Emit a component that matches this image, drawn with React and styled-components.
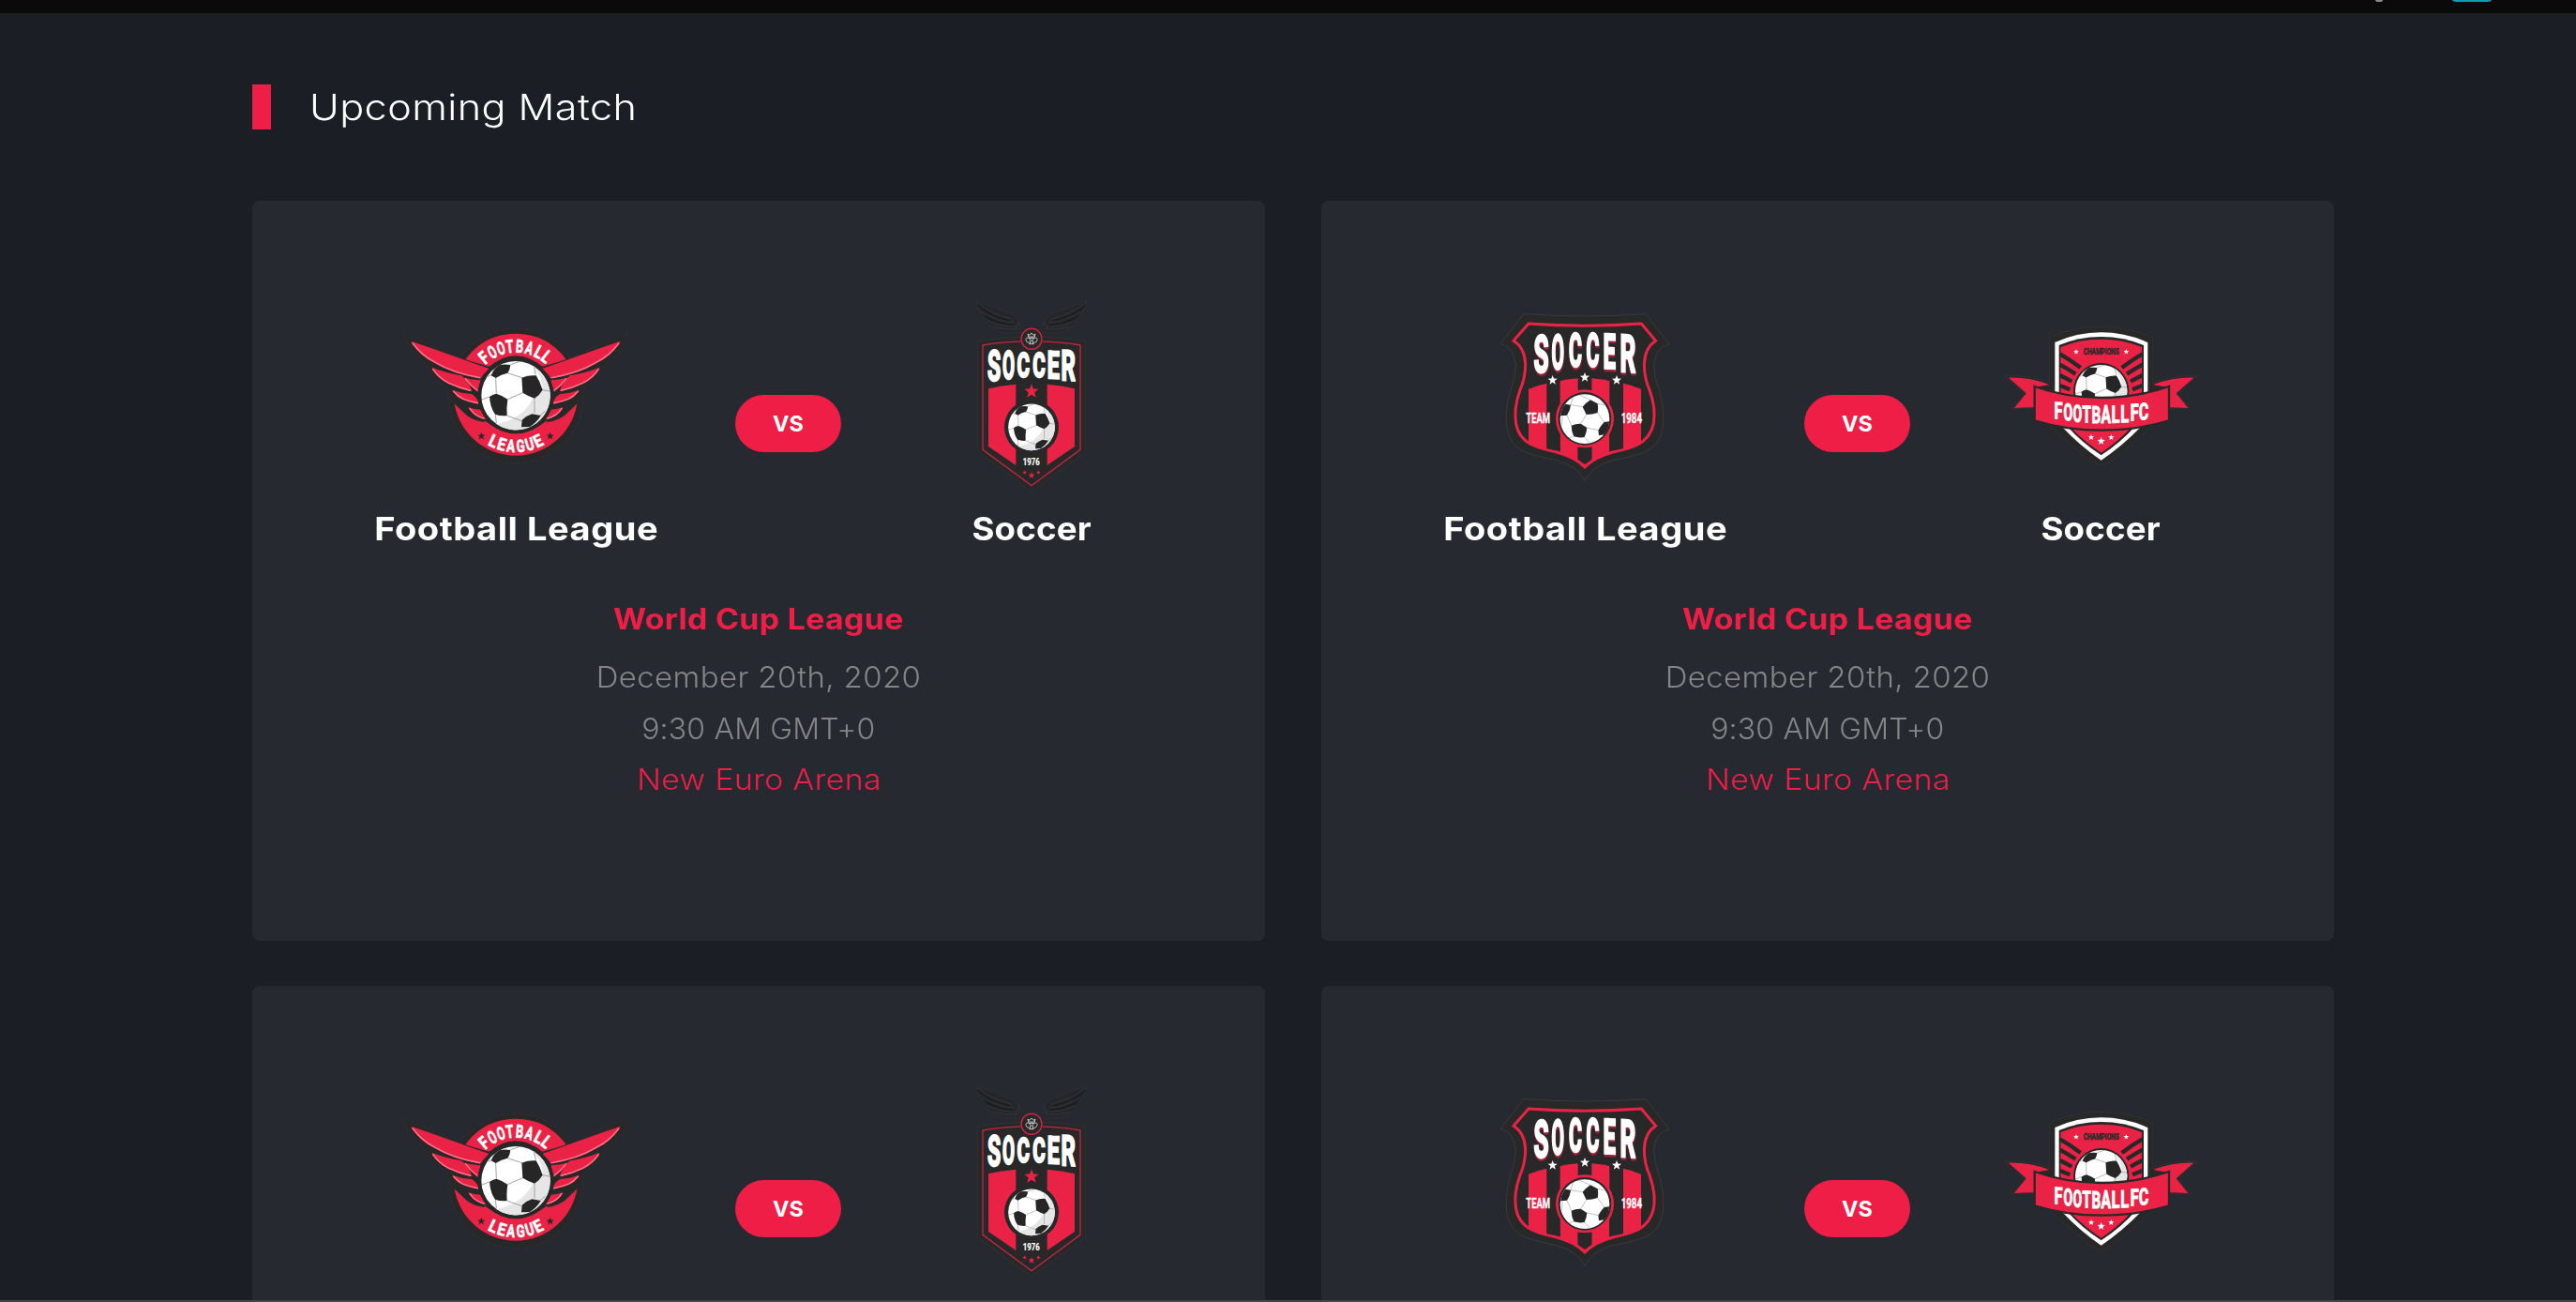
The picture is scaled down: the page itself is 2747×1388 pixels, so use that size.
import React from "react";
import styled, { createGlobalStyle } from "styled-components";

const RED = "#ee1e46";
const CREST_RED = "#ea2346";
const INK = "#282828";

const Global = createGlobalStyle`
  *, *::before, *::after { box-sizing: border-box; }
  html, body { margin: 0; background: #1b1e25; }
  body { font-family: Inter, "Liberation Sans", sans-serif; overflow: hidden; }
`;

const Page = styled.div`
  height: 1388px;
  overflow: hidden;
  display: flex;
  flex-direction: column;
  background: #1b1e25;
`;

const TopBar = styled.header`
  flex: none;
  height: 14px;
  background: #0a0a0a;
  display: flex;
  justify-content: flex-end;
  align-items: flex-start;
  gap: 74px;
  padding-right: 90px;
`;

const CaretTip = styled.i`
  width: 8px;
  height: 2px;
  background: #8a8a8a;
  border-radius: 0 0 4px 4px;
`;

const ButtonEdge = styled.i`
  width: 42px;
  height: 2px;
  background: #0b9db0;
  border-radius: 0 0 6px 6px / 0 0 2px 2px;
`;

const Section = styled.main`
  flex: 1;
  min-height: 0;
  overflow: hidden;
  width: 2220px;
  margin-left: 269px;
  padding-top: 76px;
`;

const Heading = styled.div`
  display: flex;
  align-items: center;
  gap: 41px;
  height: 48px;
  margin-bottom: 76px;
`;

const Marker = styled.span`
  width: 20px;
  height: 48px;
  background: ${RED};
`;

/* Widened lettering. Letter spacing trails the last glyph, so it is pulled back on the right. */
const Wide = styled.span`
  display: block;
  white-space: nowrap;
  letter-spacing: ${(p) => p.$track}px;
  margin-right: ${(p) => -p.$track}px;
  transform: scaleX(${(p) => p.$stretch});
  transform-origin: ${(p) => p.$origin || "center"};
`;

const Title = styled.h2`
  margin: 0;
  font-size: 38.5px;
  line-height: 48px;
  font-weight: 330;
  color: #fff;
`;

const Grid = styled.div`
  display: grid;
  grid-template-columns: 1080px 1080px;
  grid-auto-rows: 789px;
  column-gap: 60px;
  row-gap: 48px;
`;

const Card = styled.article`
  background: #272930;
  border-radius: 8px;
  padding-top: 86px;
  display: flex;
  flex-direction: column;
  align-items: center;
`;

const Versus = styled.div`
  width: 1080px;
  display: grid;
  grid-template-columns: 400px 113px 400px;
  column-gap: 34px;
  padding-left: 81px;
  align-items: start;
`;

const Team = styled.div`
  display: flex;
  flex-direction: column;
  align-items: center;
  gap: 13px;
  padding-right: ${(p) => p.$inset || 0}px;
`;

const Crest = styled.svg`
  display: block;
  width: ${(p) => p.$w}px;
  height: 230px;
`;

const TeamName = styled.h3`
  margin: 0;
  height: 40px;
  line-height: 40px;
  font-size: 34.6px;
  font-weight: 700;
  color: #fff;
`;

const Pill = styled.span`
  margin-top: 121px;
  height: 61px;
  border-radius: 31px;
  background: ${RED};
  color: #fff;
  font-size: 23.4px;
  font-weight: 700;
  display: flex;
  align-items: center;
  justify-content: center;
  line-height: 61px;
`;

const Info = styled.div`
  margin-top: 57px;
  display: flex;
  flex-direction: column;
  align-items: center;
  font-size: 30.8px;
`;

const League = styled.strong`
  line-height: 40px;
  margin-bottom: 15.4px;
  font-weight: 700;
  color: ${RED};
`;

const Line = styled.span`
  height: 54.4px;
  line-height: 54.4px;
  font-weight: 320;
  color: ${(p) => (p.$accent ? RED : "#858585")};
`;

const FootRule = styled.footer`
  flex: none;
  height: 2px;
  background: #454545;
`;

const glyphFont = { fontFamily: 'Roboto, "Liberation Sans", sans-serif', fontWeight: 700 };

/* One letter fitted to a box: x/y is the bottom-left corner, w/h the letter size. */
function Glyph({ c, x, y, w, h, fill = "#fff", stroke = 1, rot = 0, skew = 0 }) {
  const size = h / 0.711;
  return (
    <g transform={`translate(${x + w / 2} ${y}) rotate(${rot}) skewY(${skew})`}>
      <text
        x={-w / 2 - w * 0.06}
        y={0}
        textLength={w * 1.12}
        lengthAdjust="spacingAndGlyphs"
        fontSize={size}
        fill={fill}
        stroke={fill}
        strokeWidth={stroke}
        style={glyphFont}
      >
        {c}
      </text>
    </g>
  );
}

function Word({ children, x, y, w, h, fill = "#fff", stroke = 0.6 }) {
  return (
    <text
      x={x}
      y={y}
      textLength={w}
      lengthAdjust="spacingAndGlyphs"
      fontSize={h / 0.711}
      fill={fill}
      stroke={fill}
      strokeWidth={stroke}
      style={glyphFont}
    >
      {children}
    </text>
  );
}

function Arc({ cx, cy, r, letters, w, h, flip }) {
  return letters.map(([c, deg], i) => {
    const a = (deg * Math.PI) / 180;
    const x = cx + r * Math.sin(a);
    const y = cy + (flip ? 1 : -1) * r * Math.cos(a);
    return <Glyph key={i} c={c} x={x - w / 2} y={y} w={w} h={h} stroke={2} rot={flip ? -deg : deg} />;
  });
}

function Star({ x, y, r, fill = "#fff" }) {
  const pts = Array.from({ length: 10 }, (_, i) => {
    const a = (Math.PI / 5) * i - Math.PI / 2;
    const q = i % 2 ? r * 0.42 : r;
    return `${(x + q * Math.cos(a)).toFixed(1)},${(y + q * Math.sin(a)).toFixed(1)}`;
  }).join(" ");
  return <polygon points={pts} fill={fill} />;
}

/* Football with a 110 unit radius, centred on the origin. */
function Ball({ x, y, k = 1 }) {
  return (
    <g transform={`translate(${x} ${y}) scale(${k})`}>
      <circle r="110" fill="#fff" />
      <path d="M110 -8 A110 110 0 0 1 -62 91 Q10 76 42 30 Q58 8 60 -14 L86 -18 Q88 -56 56 -92 Q106 -58 110 -8Z" fill="#e6e6e6" />
      <g fill="none" stroke="#a3a3a3" strokeWidth="3">
        <path d="M-26 -72 L20 -57 M-64 -56 L-62 -6 M64 -66 L58 -94 M84 -18 L109 -14 M60 9 L60 56 M22 -9 L-26 12 M-28 64 L18 81 M-65 60 L-62 88 M-108 13 L-84 4 M-17 -99 L10 -108 M78 64 L94 50 M-78 -66 L-92 -60" />
      </g>
      <g fill="#262626">
        <path d="M-79 -64 Q-70 -90 -50 -98 Q-34 -101 -17 -98 Q-18 -84 -26 -72 Q-46 -68 -64 -56Z" />
        <path d="M19 -57 Q42 -66 65 -64 Q78 -44 86 -18 Q75 0 60 9 Q40 2 22 -9Z" />
        <path d="M-84 4 Q-76 -4 -62 -6 Q-42 0 -26 12 Q-30 40 -28 64 Q-48 66 -66 60 Q-82 38 -84 4Z" />
        <path d="M18 101 L20 78 Q36 64 52 59 L80 64 Q66 88 44 100Z" />
      </g>
    </g>
  );
}

function WingedHalf() {
  return (
    <g>
      <path
        d="M30 104 L218 188 L310 214 L290 390 Q245 384 222 358 L178 316 L170 276 Q128 256 106 208 Q50 168 30 104Z"
        fill={INK}
        stroke="#3a3a3a"
        strokeWidth="1"
      />
      <g fill={CREST_RED}>
        <path d="M55 131 Q130 156 228 192 L308 220 Q286 234 279 250 Q190 238 132 202 Q82 178 55 131Z" />
        <path d="M121 215 Q165 232 216 241 Q240 258 250 292 Q210 284 172 266 Q138 248 121 215Z" />
        <path d="M225 248 Q252 254 278 256 Q274 272 270 294 Q244 276 225 248Z" />
        <path d="M186 287 Q216 298 248 300 Q268 310 272 332 Q240 328 216 316 Q200 308 186 287Z" />
        <path d="M238 342 Q260 350 278 350 Q284 362 296 382 Q256 376 238 342Z" />
      </g>
      <g fill="none" stroke="#f7778c" strokeWidth="4.5" strokeLinecap="round">
        <path d="M60 138 Q90 178 134 200 Q192 234 275 248" />
        <path d="M125 221 Q142 248 176 265 Q210 281 244 289" />
        <path d="M191 292 Q204 308 222 316 Q244 324 268 329" />
        <path d="M243 347 Q258 370 288 378" />
        <path d="M229 251 Q246 274 266 288" />
      </g>
    </g>
  );
}

function WingedCrest() {
  return (
    <Crest $w={260} viewBox="0 -60 780 690" aria-hidden="true">
      <circle cx="390" cy="306" r="215" fill={INK} stroke="#3a3a3a" strokeWidth="1.5" strokeDasharray="14 6" />
      <path d="M229 189 Q290 107 390 107 Q490 107 551 189 L480 216 Q390 140 300 216Z" fill={CREST_RED} />
      <path d="M192 318 Q240 350 290 385 Q340 425 390 425 Q440 425 490 385 Q540 350 588 318 A199 199 0 0 1 192 318Z" fill={CREST_RED} />
      <WingedHalf />
      <g transform="translate(780 0) scale(-1 1)">
        <WingedHalf />
      </g>
      <circle cx="390" cy="305" r="122" fill={INK} />
      <Ball x={390} y={305} />
      <Arc
        cx={390}
        cy={305}
        r={138}
        w={22}
        h={41}
        letters={[["F", -40], ["O", -28.5], ["O", -17.5], ["T", -7], ["B", 4.5], ["A", 16], ["L", 28], ["L", 38.5]]}
      />
      <Arc
        cx={390}
        cy={305}
        r={181}
        w={24}
        h={39}
        flip
        letters={[["L", -26], ["E", -16], ["A", -5.5], ["G", 5.5], ["U", 16], ["E", 26]]}
      />
      <Star x={280} y={435} r={13} fill={INK} />
      <Star x={500} y={435} r={13} fill={INK} />
    </Crest>
  );
}

function FeatherHalf() {
  return (
    <g>
      <path
        d="M64 61 L150 94 Q190 104 200 128 L205 160 Q190 166 150 164 Q128 160 118 148 Q98 140 92 122 Q72 96 64 61Z"
        fill="#25262a"
        stroke="#34353a"
        strokeWidth="2"
      />
      <path
        d="M70 70 Q110 104 178 120 M84 98 Q130 128 186 132 M98 124 Q140 146 192 144 M120 146 Q160 158 198 152 M188 158 L200 126"
        fill="none"
        stroke="#3b3c41"
        strokeWidth="2"
      />
      <path d="M68 76 Q104 112 170 126 M92 112 Q138 140 184 139" fill="none" stroke="#1d1e21" strokeWidth="5" />
    </g>
  );
}

function ShieldCrest() {
  return (
    <Crest $w={160} viewBox="0 0 480 690" aria-hidden="true">
      <FeatherHalf />
      <g transform="translate(480 0) scale(-1 1)">
        <FeatherHalf />
      </g>
      <path d="M67 191 Q140 178 240 178 Q340 178 413 191 V546 L240 672 L67 546Z" fill={INK} stroke="#3a3a3a" strokeWidth="1.5" />
      <path d="M84 204 Q150 192 240 191 Q330 192 396 204 V538 L240 653 L84 538Z" fill="none" stroke="#c42543" strokeWidth="4" />
      <circle cx="240" cy="184" r="37" fill={INK} />
      <circle cx="240" cy="184" r="33" fill={INK} stroke="#c42543" strokeWidth="4.5" />
      <g stroke="#c9c9c9" strokeWidth="3" fill="none" strokeLinecap="round" strokeLinejoin="round">
        <path d="M230 176 L228 168 L234 172 L240 165 L246 172 L252 168 L250 176Z" />
        <path d="M231 180 Q221 178 222 188 Q224 196 232 196 M249 180 Q259 178 258 188 Q256 196 248 196" />
        <path d="M232 182 L240 190 L248 182 Z M236 190 V198 M244 190 V198 M233 200 H247" />
      </g>
      <path d="M102 343 Q145 333 190 329 V588 L102 528Z" fill={CREST_RED} />
      <path d="M378 343 Q335 333 290 329 V588 L378 528Z" fill={CREST_RED} />
      <circle cx="240" cy="466" r="87" fill={INK} />
      <Ball x={240} y={466} k={0.677} />
      <Glyph c="S" x={101} y={317} w={38} h={96} stroke={7} skew={-3} />
      <Glyph c="O" x={149} y={311} w={35} h={88} stroke={7} skew={-2} />
      <Glyph c="C" x={196} y={307} w={36} h={80} stroke={7} />
      <Glyph c="C" x={246} y={307} w={36} h={80} stroke={7} />
      <Glyph c="E" x={292} y={310} w={35} h={86} stroke={7} skew={2} />
      <Glyph c="R" x={337} y={316} w={41} h={95} stroke={7} skew={3} />
      <Star x={240} y={352} r={24} fill={CREST_RED} />
      <Word x={212} y={587} w={54} h={24}>1976</Word>
      <Star x={218} y={611} r={7} fill={CREST_RED} />
      <Star x={240} y={620} r={11} fill={CREST_RED} />
      <Star x={262} y={611} r={7} fill={CREST_RED} />
    </Crest>
  );
}

const BADGE_EDGE =
  "M72 130 L120 75 Q300 88 481 75 L527 130 Q492 152 490 205 Q490 250 508 290 Q528 345 520 395 Q510 440 470 462 Q440 476 390 486 Q330 502 300 534 Q270 502 210 486 Q160 476 130 462 Q88 440 80 395 Q72 345 92 290 Q110 250 110 205 Q108 152 72 130Z";

const BADGE_WORD = [
  ["S", 139, 230, 43, 117, -4],
  ["O", 196, 220, 36, 109, -3],
  ["C", 251, 214, 37, 106, 0],
  ["C", 307, 214, 37, 106, 0],
  ["E", 361, 218, 36, 109, 3],
  ["R", 415, 229, 45, 117, 4],
];

const BadgeTitle = styled.g`
  filter: drop-shadow(1px 7px 0 #a51f38);
`;

function BadgeCrest() {
  const clip = React.useId();
  return (
    <Crest $w={200} viewBox="0 -60 600 690" aria-hidden="true">
      <clipPath id={clip}>
        <path d={BADGE_EDGE} />
      </clipPath>
      <path
        d="M30 140 L105 44 Q300 58 495 44 L570 141 Q528 146 521 205 Q521 245 538 290 Q556 350 550 405 Q542 470 480 490 Q440 503 390 512 Q322 530 300 578 Q278 530 210 512 Q160 503 120 490 Q58 470 50 405 Q44 350 62 290 Q79 245 79 205 Q72 146 30 140Z"
        fill={INK}
        stroke="#434343"
        strokeWidth="2"
      />
      <g clipPath={`url(#${clip})`} fill={CREST_RED}>
        <path d="M120 284 Q148 272 178 266 V492 L120 456Z" />
        <path d="M221 258 Q250 252 278 250 V524 L221 496Z" />
        <path d="M379 258 Q350 252 322 250 V524 L379 496Z" />
        <path d="M480 284 Q452 272 423 266 V492 L480 456Z" />
        <path d="M178 480 L300 512 L422 480 V560 H178Z" />
        <path d="M179 400 H221 V489 L179 479Z M379 400 H422 V479 L379 489Z M278 400 H322 V512 L300 525 L278 512Z" fill={INK} />
      </g>
      <path d={BADGE_EDGE} fill="none" stroke={CREST_RED} strokeWidth="9" />
      <circle cx="300" cy="379" r="93" fill={CREST_RED} />
      <circle cx="300" cy="379" r="85" fill={INK} />
      <circle cx="300" cy="380" r="79" fill="#fff" />
      <path
        d="M282 303 L318 319 M255 335 L293 341 M243 368 L257 401 M305 366 L287 395 M341 360 L362 390 M341 331 L366 336 M307 408 L343 416 M299 438 L316 456 M265 436 L250 440 M228 372 L226 400 M262 311 L255 335"
        fill="none"
        stroke="#a3a3a3"
        strokeWidth="2"
      />
      <g fill="#262626">
        <path d="M293 341 Q304 328 318 319 L341 331 Q344 346 341 360 Q324 366 305 366Z" />
        <path d="M222 370 Q225 345 238 332 L255 335 Q254 352 243 368Z" />
        <path d="M257 401 Q272 394 287 395 L307 408 Q306 424 299 438 Q282 441 265 436 Q257 420 257 401Z" />
        <path d="M343 416 Q352 400 362 390 L378 388 Q378 412 362 430 L345 433Z" />
      </g>
      <BadgeTitle>
        {BADGE_WORD.map(([c, x, y, w, h, skew], i) => (
          <Glyph key={i} c={c} x={x} y={y} w={w} h={h} stroke={8} skew={skew} />
        ))}
      </BadgeTitle>
      <Star x={197} y={256} r={16} />
      <Star x={300} y={247} r={16} />
      <Star x={402} y={256} r={16} />
      <Word x={112} y={393} w={77} h={30} stroke={1}>TEAM</Word>
      <Word x={416} y={393} w={67} h={30} stroke={1}>1984</Word>
    </Crest>
  );
}

function RibbonTail() {
  return (
    <g>
      <path d="M54 213 Q130 208 210 238 V322 Q150 314 78 318 L116 268Z" fill={INK} stroke="#3a3a3a" strokeWidth="1.5" />
      <path d="M66 218 Q130 216 196 240 Q166 246 148 248 V313 Q115 313 84 315 L122 268Z" fill={CREST_RED} />
      <g fill="none" stroke={INK} strokeWidth="13">
        <path d="M230 142 Q262 160 296 186" />
        <path d="M230 176 Q255 190 280 206" />
        <path d="M230 210 Q250 220 268 230" />
        <path d="M230 243 Q248 250 262 256" />
      </g>
      <path d="M232 266 L262 274 V290 H232Z" fill={INK} />
    </g>
  );
}

const RIBBON_WORD = [
  ["F", 213, 349, 24, 53, 2],
  ["O", 243, 355, 26, 54, 4],
  ["O", 273, 359, 26, 54, 3],
  ["T", 303, 362, 25, 54, 1],
  ["B", 333, 363, 26, 54, 1],
  ["A", 363, 363, 28, 54, 0],
  ["L", 396, 362, 24, 54, -1],
  ["L", 425, 360, 24, 54, -2],
  ["F", 457, 355, 24, 53, -3],
  ["C", 484, 352, 28, 53, -4],
];

function RibbonCrest() {
  return (
    <Crest $w={240} viewBox="0 -90 720 690" aria-hidden="true">
      <path
        d="M197 90 Q275 55 362 55 Q449 55 527 90 V372 L400 480 Q362 512 324 480 L197 372Z"
        fill={INK}
        stroke="#3a3a3a"
        strokeWidth="1.5"
      />
      <path d="M214 105 Q285 73 362 73 Q439 73 511 105 V350 L486 378 Q430 436 362 482 Q294 436 240 378 L214 350Z" fill="#fff" />
      <path d="M227 114 Q290 87 362 87 Q434 87 498 114 V340 L470 374 Q425 424 362 466 Q299 424 254 374 L227 340Z" fill={INK} />
      <path d="M232 120 Q290 95 362 95 Q434 95 492 120 V340 L450 385 Q412 426 362 458 Q312 426 272 385 L232 340Z" fill={CREST_RED} />
      <RibbonTail />
      <g transform="translate(724 0) scale(-1 1)">
        <RibbonTail />
      </g>
      <circle cx="362" cy="260" r="97" fill={CREST_RED} />
      <circle cx="362" cy="260" r="89" fill={INK} />
      <Ball x={362} y={260} k={0.755} />
      <path d="M149 246 Q250 282 362 282 Q474 282 579 246 V355 Q474 386 362 386 Q250 386 149 355Z" fill={CREST_RED} stroke={INK} strokeWidth="7" />
      <Word x={305} y={144} w={114} h={21} fill={INK} stroke={1.4}>CHAMPIONS</Word>
      <Star x={282} y={135} r={9} />
      <Star x={442} y={135} r={9} />
      {RIBBON_WORD.map(([c, x, y, w, h, skew], i) => (
        <Glyph key={i} c={c} x={x} y={y} w={w} h={h} stroke={3} skew={skew} />
      ))}
      <Star x={330} y={409} r={10} />
      <Star x={362} y={421} r={13} />
      <Star x={394} y={409} r={10} />
    </Crest>
  );
}

function Match({ home: Home, away: Away }) {
  return (
    <Card>
      <Versus>
        <Team>
          <Home />
          <TeamName>
            <Wide $track={0.48} $stretch={1.1}>Football League</Wide>
          </TeamName>
        </Team>
        <Pill>VS</Pill>
        <Team $inset={62}>
          <Away />
          <TeamName>
            <Wide $track={0.15} $stretch={1.06}>Soccer</Wide>
          </TeamName>
        </Team>
      </Versus>
      <Info>
        <League>
          <Wide $track={0.29} $stretch={1.1}>World Cup League</Wide>
        </League>
        <Line>
          <Wide $track={0.37} $stretch={1.07}>December 20th, 2020</Wide>
        </Line>
        <Line>
          <Wide $track={0.14} $stretch={1.04}>9:30 AM GMT+0</Wide>
        </Line>
        <Line $accent>
          <Wide $track={0.32} $stretch={1.1}>New Euro Arena</Wide>
        </Line>
      </Info>
    </Card>
  );
}

export default function App() {
  return (
    <Page>
      <Global />
      <TopBar>
        <CaretTip />
        <ButtonEdge />
      </TopBar>
      <Section>
        <Heading>
          <Marker />
          <Title>
            <Wide $track={0.4} $stretch={1.12} $origin="left">Upcoming Match</Wide>
          </Title>
        </Heading>
        <Grid>
          <Match home={WingedCrest} away={ShieldCrest} />
          <Match home={BadgeCrest} away={RibbonCrest} />
          <Match home={WingedCrest} away={ShieldCrest} />
          <Match home={BadgeCrest} away={RibbonCrest} />
        </Grid>
      </Section>
      <FootRule />
    </Page>
  );
}
